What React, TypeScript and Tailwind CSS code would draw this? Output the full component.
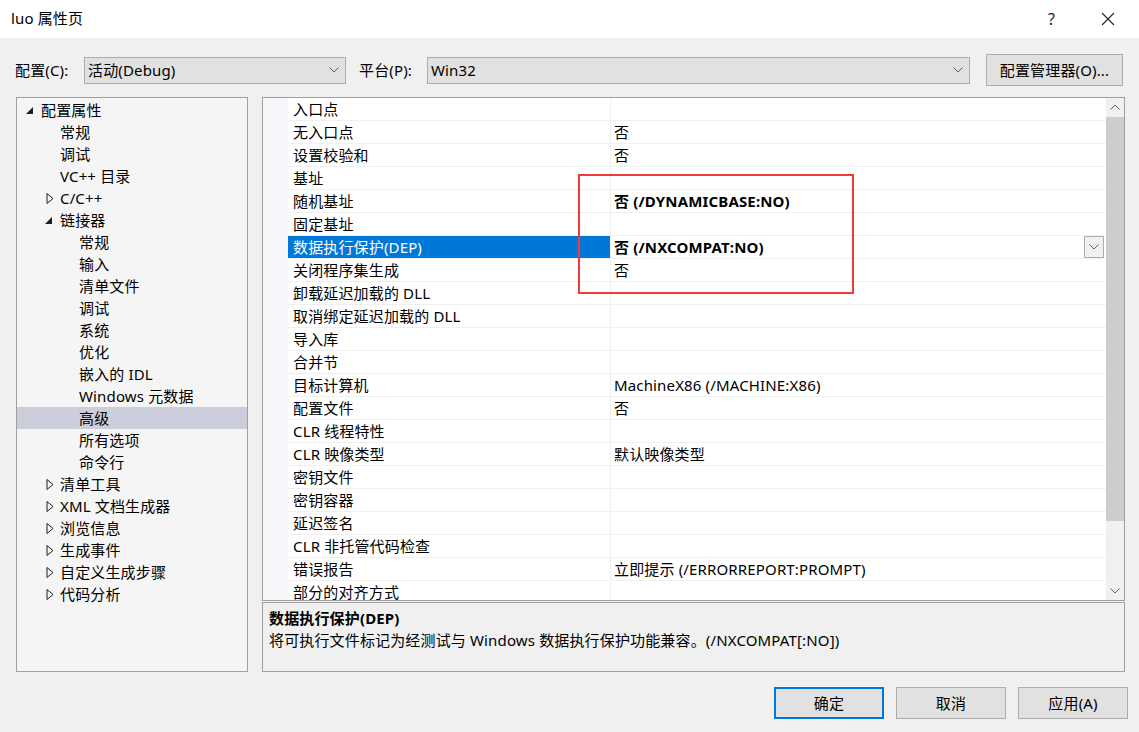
import React from "react";

const font = { fontFamily: '"Noto Sans", "Noto Sans CJK SC", sans-serif' };

type TreeItem = { t: string; lvl: number; exp?: "open" | "closed"; sel?: boolean };

const tree: TreeItem[] = [
  { t: "配置属性", lvl: 0, exp: "open" },
  { t: "常规", lvl: 1 },
  { t: "调试", lvl: 1 },
  { t: "VC++ 目录", lvl: 1 },
  { t: "C/C++", lvl: 1, exp: "closed" },
  { t: "链接器", lvl: 1, exp: "open" },
  { t: "常规", lvl: 2 },
  { t: "输入", lvl: 2 },
  { t: "清单文件", lvl: 2 },
  { t: "调试", lvl: 2 },
  { t: "系统", lvl: 2 },
  { t: "优化", lvl: 2 },
  { t: "嵌入的 IDL", lvl: 2 },
  { t: "Windows 元数据", lvl: 2 },
  { t: "高级", lvl: 2, sel: true },
  { t: "所有选项", lvl: 2 },
  { t: "命令行", lvl: 2 },
  { t: "清单工具", lvl: 1, exp: "closed" },
  { t: "XML 文档生成器", lvl: 1, exp: "closed" },
  { t: "浏览信息", lvl: 1, exp: "closed" },
  { t: "生成事件", lvl: 1, exp: "closed" },
  { t: "自定义生成步骤", lvl: 1, exp: "closed" },
  { t: "代码分析", lvl: 1, exp: "closed" },
];

type Prop = { name: string; value?: string; bold?: boolean; sel?: boolean };

const props: Prop[] = [
  { name: "入口点" },
  { name: "无入口点", value: "否" },
  { name: "设置校验和", value: "否" },
  { name: "基址" },
  { name: "随机基址", value: "否 (/DYNAMICBASE:NO)", bold: true },
  { name: "固定基址" },
  { name: "数据执行保护(DEP)", value: "否 (/NXCOMPAT:NO)", bold: true, sel: true },
  { name: "关闭程序集生成", value: "否" },
  { name: "卸载延迟加载的 DLL" },
  { name: "取消绑定延迟加载的 DLL" },
  { name: "导入库" },
  { name: "合并节" },
  { name: "目标计算机", value: "MachineX86 (/MACHINE:X86)" },
  { name: "配置文件", value: "否" },
  { name: "CLR 线程特性" },
  { name: "CLR 映像类型", value: "默认映像类型" },
  { name: "密钥文件" },
  { name: "密钥容器" },
  { name: "延迟签名" },
  { name: "CLR 非托管代码检查" },
  { name: "错误报告", value: "立即提示 (/ERRORREPORT:PROMPT)" },
  { name: "部分的对齐方式" },
];

function Chevron({ className = "" }: { className?: string }) {
  return (
    <svg width="10" height="6" viewBox="0 0 10 6" className={className}>
      <path d="M0.5 0.5 L5 5 L9.5 0.5" fill="none" stroke="#606060" strokeWidth="1" />
    </svg>
  );
}

function Expander({ exp }: { exp: "open" | "closed" }) {
  if (exp === "open") {
    return (
      <svg width="9" height="9" viewBox="0 0 9 9">
        <path d="M8 1 L8 8 L1 8 Z" fill="#1e1e1e" />
      </svg>
    );
  }
  return (
    <svg width="8" height="11" viewBox="0 0 8 11">
      <path d="M1 0.5 L7 5.5 L1 10.5 Z" fill="none" stroke="#1e1e1e" strokeWidth="1" />
    </svg>
  );
}

function Select({ value, width }: { value: string; width: string }) {
  return (
    <div className={`${width} flex h-[27px] items-center justify-between border border-[#adadad] bg-[#e1e1e1] pl-[3px] pr-[6px]`}>
      <span>{value}</span>
      <Chevron />
    </div>
  );
}

export default function App() {
  return (
    <div className="relative flex h-[732px] w-[1139px] flex-col overflow-hidden bg-[#f0f0f0] text-[15px] tracking-[0.15px] text-black" style={font}>
      {/* title bar */}
      <div className="flex h-[38px] items-center bg-white pl-[11px]">
        <span className="flex-1 pb-[2px]">luo 属性页</span>
        <span className="mr-[46px] text-[16px] text-[#222]">?</span>
        <svg width="14" height="14" viewBox="0 0 14 14" className="mr-[24px]">
          <path d="M1 1 L13 13 M13 1 L1 13" stroke="#222" strokeWidth="1.1" />
        </svg>
      </div>

      {/* configuration row */}
      <div className="mt-[16px] flex h-[32px] items-center">
        <span className="ml-[15px] w-[69px]">配置(C):</span>
        <Select value="活动(Debug)" width="w-[262px]" />
        <span className="ml-[13px] w-[68px]">平台(P):</span>
        <Select value="Win32" width="w-[543px]" />
        <div className="ml-[16px] flex h-[32px] w-[137px] items-center justify-center border border-[#adadad] bg-[#e1e1e1]">
          配置管理器(O)...
        </div>
      </div>

      {/* main area */}
      <div className="mt-[11px] flex h-[575px]">
        {/* tree */}
        <div className="ml-[16px] w-[232px] border border-[#a0a0a0] bg-[#f5f5f5] py-[1px]">
          {tree.map((it, i) => (
            <div
              key={i}
              className={`relative flex h-[22px] items-center ${it.sel ? "bg-[#cccedb]" : ""}`}
              style={{ paddingLeft: 24 + it.lvl * 19 }}
            >
              {it.exp && (
                <span className="absolute top-0 flex h-[22px] items-center" style={{ left: it.exp === "open" ? 8 + it.lvl * 19 : 10 + it.lvl * 19 }}>
                  <Expander exp={it.exp} />
                </span>
              )}
              <span className="whitespace-nowrap">{it.t}</span>
            </div>
          ))}
        </div>

        {/* right side */}
        <div className="ml-[14px] flex w-[863px] flex-col">
          {/* grid */}
          <div className="flex h-[504px] border border-[#a0a0a0] bg-white">
            <div className="flex-1 overflow-hidden">
              {props.map((p, i) => (
                <div key={i} className="flex h-[23px]">
                  <div className="w-[25px] shrink-0 bg-[#f5f7fa]" />
                  <div
                    className={`flex w-[322px] shrink-0 items-center border-b border-[#f0f0f0] pl-[5px] ${p.sel ? "bg-[#0078d7] text-white" : ""}`}
                  >
                    <span className="whitespace-nowrap">{p.name}</span>
                  </div>
                  <div className={`flex flex-1 items-center border-b border-l border-[#f0f0f0] pl-[3px] ${p.bold ? "font-bold" : ""}`}>
                    <span className="flex-1 whitespace-nowrap">{p.value}</span>
                    {p.sel && (
                      <div className="mr-[2px] flex h-[22px] w-[20px] items-center justify-center border border-[#adadad] bg-[#f0f0f0]">
                        <Chevron />
                      </div>
                    )}
                  </div>
                </div>
              ))}
            </div>
            {/* scrollbar */}
            <div className="flex w-[18px] flex-col bg-[#f0f0f0]">
              <div className="flex h-[18px] items-center justify-center">
                <Chevron className="rotate-180" />
              </div>
              <div className="mt-[1px] h-[404px] bg-[#cdcdcd]" />
              <div className="flex-1" />
              <div className="flex h-[18px] items-center justify-center">
                <Chevron />
              </div>
            </div>
          </div>

          {/* description */}
          <div className="mt-[1px] flex-1 border border-[#a0a0a0] bg-[#f0f0f0] pl-[6px] pt-[4px]">
            <div className="h-[22px] font-bold">数据执行保护(DEP)</div>
            <div className="h-[22px]">将可执行文件标记为经测试与 Windows 数据执行保护功能兼容。(/NXCOMPAT[:NO])</div>
          </div>
        </div>
      </div>

      {/* buttons */}
      <div className="mt-[15px] flex justify-end gap-[12px] pr-[11px]">
        <div className="flex h-[32px] w-[110px] items-center justify-center border-2 border-[#0078d7] bg-[#e1e1e1]">确定</div>
        <div className="flex h-[32px] w-[110px] items-center justify-center border border-[#adadad] bg-[#e1e1e1]">取消</div>
        <div className="flex h-[32px] w-[110px] items-center justify-center border border-[#adadad] bg-[#e1e1e1]">应用(A)</div>
      </div>

      {/* red annotation */}
      <div className="absolute left-[578px] top-[174px] h-[120px] w-[276px] border-2 border-[#ef3b3b]" />
    </div>
  );
}
